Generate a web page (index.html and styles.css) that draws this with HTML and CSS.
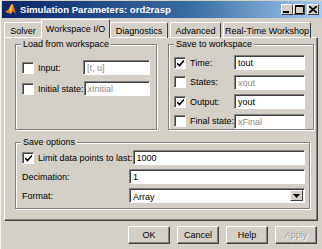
FILE: index.html
```html
<!DOCTYPE html>
<html lang="en">
<head>
  <meta charset="UTF-8">
  <title>Simulation Parameters: ord2rasp</title>
  <link rel="stylesheet" href="styles.css">
</head>
<body>
  <div class="window">
    <div class="titlebar">
      <svg class="app-icon" width="13" height="13" viewBox="0 0 13 13">
        <path d="M1 9 L5 6 L7 2 L9 1 L12 11 L9 8 L7 11 Z" fill="#e07a10"/>
        <path d="M5 6 L7 2 L9 1 L7 11 Z" fill="#f7b733"/>
      </svg>
      <span class="title">Simulation Parameters: ord2rasp</span>
      <div class="caption-btns">
        <span class="cbtn"><svg width="8" height="7" viewBox="0 0 8 7"><rect x="0" y="5" width="6" height="2" fill="#000"/></svg></span>
        <span class="cbtn"><svg width="9" height="9" viewBox="0 0 9 9"><rect x="0.5" y="0.5" width="8" height="8" fill="none" stroke="#000"/><rect x="0" y="0" width="9" height="2" fill="#000"/></svg></span>
        <span class="cbtn close"><svg width="8" height="7" viewBox="0 0 8 7"><path d="M0 0 L8 7 M8 0 L0 7" stroke="#000" stroke-width="1.8"/></svg></span>
      </div>
    </div>

    <div class="tabs">
      <span class="tab t-solver">Solver</span>
      <span class="tab active t-ws">Workspace I/O</span>
      <span class="tab t-diag">Diagnostics</span>
      <span class="tab t-adv">Advanced</span>
      <span class="tab t-rtw">Real-Time Workshop</span>
    </div>

    <div class="panel">
      <div class="top-row">
        <div class="group g-load">
          <span class="legend">Load from workspace</span>
          <div class="row">
            <span class="check"></span><span class="lbl">Input:</span>
            <span class="field dim">[t, u]</span>
          </div>
          <div class="row">
            <span class="check"></span><span class="lbl">Initial state:</span>
            <span class="field dim">xInitial</span>
          </div>
        </div>

        <div class="group g-save">
          <span class="legend">Save to workspace</span>
          <div class="row">
            <span class="check on"><svg width="7" height="7" viewBox="0 0 7 7"><path d="M0 3 L2.5 5.5 L7 0.5" fill="none" stroke="#000" stroke-width="1.6"/></svg></span><span class="lbl">Time:</span>
            <span class="field">tout</span>
          </div>
          <div class="row">
            <span class="check"></span><span class="lbl">States:</span>
            <span class="field dim">xout</span>
          </div>
          <div class="row">
            <span class="check on"><svg width="7" height="7" viewBox="0 0 7 7"><path d="M0 3 L2.5 5.5 L7 0.5" fill="none" stroke="#000" stroke-width="1.6"/></svg></span><span class="lbl">Output:</span>
            <span class="field">yout</span>
          </div>
          <div class="row">
            <span class="check"></span><span class="lbl">Final state:</span>
            <span class="field dim">xFinal</span>
          </div>
        </div>
      </div>

      <div class="group g-opts">
        <span class="legend">Save options</span>
        <div class="row">
          <span class="check on"><svg width="7" height="7" viewBox="0 0 7 7"><path d="M0 3 L2.5 5.5 L7 0.5" fill="none" stroke="#000" stroke-width="1.6"/></svg></span><span class="lbl">Limit data points to last:</span>
          <span class="field">1000</span>
        </div>
        <div class="row">
          <span class="lbl plain">Decimation:</span>
          <span class="field">1</span>
        </div>
        <div class="row">
          <span class="lbl plain">Format:</span>
          <span class="field select">Array<span class="drop"><svg width="7" height="4" viewBox="0 0 7 4"><path d="M0 0 H7 L3.5 4 Z" fill="#000"/></svg></span></span>
        </div>
      </div>
    </div>

    <div class="buttons">
      <span class="btn">OK</span>
      <span class="btn">Cancel</span>
      <span class="btn">Help</span>
      <span class="btn disabled">Apply</span>
    </div>
  </div>
</body>
</html>
```

FILE: styles.css
```css
body {
  margin: 0;
  font-family: "Liberation Sans", Arial, sans-serif;
  font-size: 9px;
  color: #000;
  background: #d4d0c8;
}

.window {
  width: 322px;
  height: 249px;
  box-sizing: border-box;
  padding: 1px 0 0 1px;
  background: #d4d0c8;
  border-left: 1px solid #f4f3ee;
  overflow: hidden;
}

.titlebar {
  height: 17px;
  width: 320px;
  display: flex;
  align-items: center;
  background: linear-gradient(to right, #0a246a, #3a6ea5 60%, #a6caf0);
  color: #fff;
}

.app-icon {
  margin: 0 3px 0 2px;
}

.title {
  font-weight: bold;
  font-size: 9.6px;
}

.caption-btns {
  margin-left: auto;
  margin-right: 3px;
  display: flex;
}

.cbtn {
  width: 12px;
  height: 11px;
  background: #d4d0c8;
  box-sizing: border-box;
  border: 1px solid;
  border-color: #fff #404040 #404040 #fff;
  display: flex;
  align-items: center;
  justify-content: center;
}

.cbtn.close {
  margin-left: 2px;
}

.tabs {
  display: flex;
  align-items: flex-end;
  height: 19px;
  margin-left: 2px;
  margin-top: 1px;
  position: relative;
  z-index: 1;
}

.tab {
  height: 16px;
  box-sizing: border-box;
  padding-top: 3px;
  text-align: center;
  border: 1px solid;
  border-color: #fff #404040 transparent #fff;
  border-bottom: none;
  border-radius: 2px 2px 0 0;
  white-space: nowrap;
}

.tab.active {
  height: 19px;
  padding-top: 4px;
  margin: 0 -1px;
  background: #d4d0c8;
}

.t-solver { width: 38px; }
.t-ws { width: 69px; }
.t-diag { width: 58px; margin-left: 1px; }
.t-adv { width: 51px; margin-left: 2px; }
.t-rtw { width: 88px; margin-left: 2px; }

.panel {
  width: 314px;
  height: 184px;
  box-sizing: border-box;
  margin-left: 2px;
  margin-top: -1px;
  border: 1px solid;
  border-color: #fff #404040 #404040 #fff;
  box-shadow: inset -1px -1px #808080;
  padding: 6px 0 0 10px;
}

.top-row {
  display: flex;
  gap: 11px;
}

.group {
  position: relative;
  border: 1px solid #808080;
  box-shadow: inset 1px 1px #fff, 1px 1px #fff;
  box-sizing: border-box;
}

.legend {
  position: absolute;
  top: -7px;
  left: 5px;
  padding: 0 2px;
  background: #d4d0c8;
  line-height: 12px;
}

.g-load {
  width: 142px;
  height: 86px;
  padding: 12px 0 0 6px;
}

.g-save {
  width: 146px;
  height: 86px;
  padding: 8px 0 0 5px;
}

.g-load .row { height: 21px; }
.g-save .row { height: 19.5px; }

.row {
  display: flex;
  align-items: center;
}

.check {
  width: 12px;
  height: 12px;
  box-sizing: border-box;
  background: #fff;
  border: 1px solid;
  border-color: #808080 #fff #fff #808080;
  box-shadow: inset 1px 1px #404040;
  display: flex;
  align-items: center;
  justify-content: center;
  padding: 1px 0 0 1px;
  flex: none;
}

.lbl {
  margin-left: 4px;
  white-space: nowrap;
}

.lbl.plain {
  margin-left: 0;
}

.field {
  height: 15px;
  box-sizing: border-box;
  background: #fff;
  border: 1px solid;
  border-color: #808080 #fff #fff #808080;
  box-shadow: inset 1px 1px #404040;
  padding: 1px 3px 0;
  line-height: 12px;
  margin-left: auto;
  position: relative;
}

.g-load .field {
  width: 67px;
  margin-right: 6px;
}

.g-save .field {
  width: 71px;
  margin-right: 8px;
}

.dim {
  color: #8a8a8a;
}

.g-opts {
  width: 295px;
  height: 67px;
  margin-top: 12px;
  padding: 5px 0 0 6px;
}

.g-opts .row {
  height: 19px;
}

.g-opts .field {
  width: 176px;
  margin-right: 4px;
}

.field.select {
  padding-top: 2px;
}

.drop {
  position: absolute;
  right: 1px;
  top: 1px;
  width: 13px;
  height: 11px;
  box-sizing: border-box;
  background: #d4d0c8;
  border: 1px solid;
  border-color: #fff #404040 #404040 #fff;
  display: flex;
  align-items: center;
  justify-content: center;
}

.buttons {
  display: flex;
  justify-content: flex-end;
  gap: 7px;
  margin: 5px 5px 0 0;
}

.btn {
  width: 42px;
  height: 18px;
  box-sizing: border-box;
  border: 1px solid;
  border-color: #fff #404040 #404040 #fff;
  box-shadow: inset -1px -1px #808080;
  display: flex;
  align-items: center;
  justify-content: center;
}

.btn.disabled {
  color: #a09c94;
  text-shadow: 1px 1px #fff;
}
```
